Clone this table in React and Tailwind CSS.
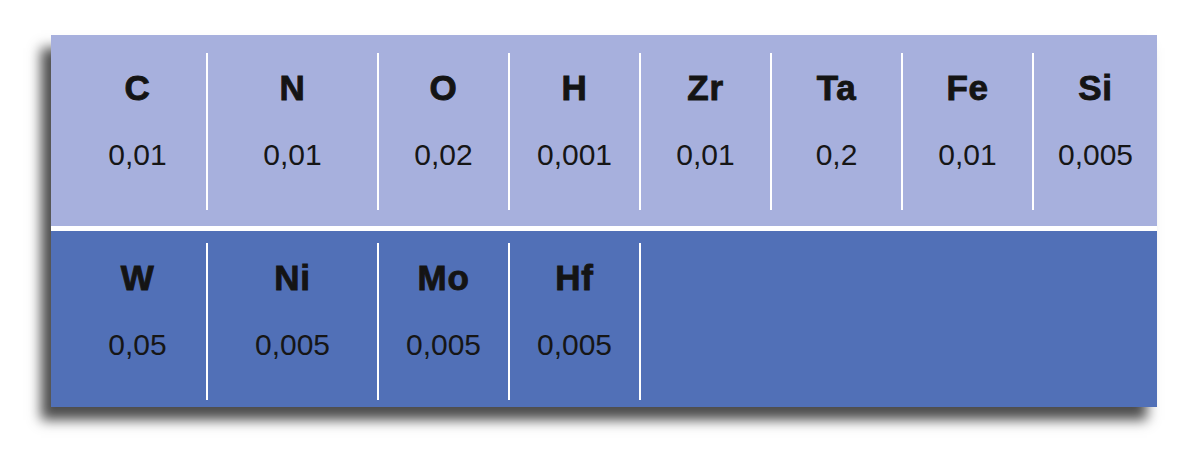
const topRow = [
  ["C", "0,01"],
  ["N", "0,01"],
  ["O", "0,02"],
  ["H", "0,001"],
  ["Zr", "0,01"],
  ["Ta", "0,2"],
  ["Fe", "0,01"],
  ["Si", "0,005"],
];

const bottomRow = [
  ["W", "0,05"],
  ["Ni", "0,005"],
  ["Mo", "0,005"],
  ["Hf", "0,005"],
];

const widths = ["w-[155px] pl-[18px]", "w-[169px]", "w-[129px]", "w-[129px]", "w-[129px]", "w-[129px]", "w-[129px]", "w-[123px]"];

function Cell({ symbol, value, width, padTop }) {
  return (
    <div className={`flex shrink-0 flex-col items-center ${width} ${padTop}`}>
      <span className="text-[35px] font-bold leading-none tracking-[0.02em] text-[#141414] [-webkit-text-stroke:0.9px_#141414]">
        {symbol}
      </span>
      <span className="mt-[35px] text-[30px] leading-none text-[#161616]">{value}</span>
    </div>
  );
}

export default function App() {
  return (
    <div className="h-[464px] w-[1200px] bg-white pl-[51px] pt-[35px] font-['Liberation_Sans',Arial,sans-serif]">
      <div className="w-[1106px] bg-white shadow-[-10px_13px_12px_rgba(0,0,0,0.7)]">
        <div className="flex h-[191px] bg-[#a7b0dd]">
          {topRow.map(([symbol, value], index) => (
            <div key={symbol} className="flex">
              {index > 0 && <div className="mb-[16px] mt-[18px] w-[2px] bg-white" />}
              <Cell symbol={symbol} value={value} width={widths[index]} padTop="pt-[35px]" />
            </div>
          ))}
        </div>
        <div className="h-[5px] bg-white" />
        <div className="flex h-[176px] bg-[#5170b7]">
          {bottomRow.map(([symbol, value], index) => (
            <div key={symbol} className="flex">
              {index > 0 && <div className="mb-[7px] mt-[12px] w-[2px] bg-white" />}
              <Cell symbol={symbol} value={value} width={widths[index]} padTop="pt-[29px]" />
            </div>
          ))}
          <div className="mb-[7px] mt-[12px] w-[2px] bg-white" />
        </div>
      </div>
    </div>
  );
}
